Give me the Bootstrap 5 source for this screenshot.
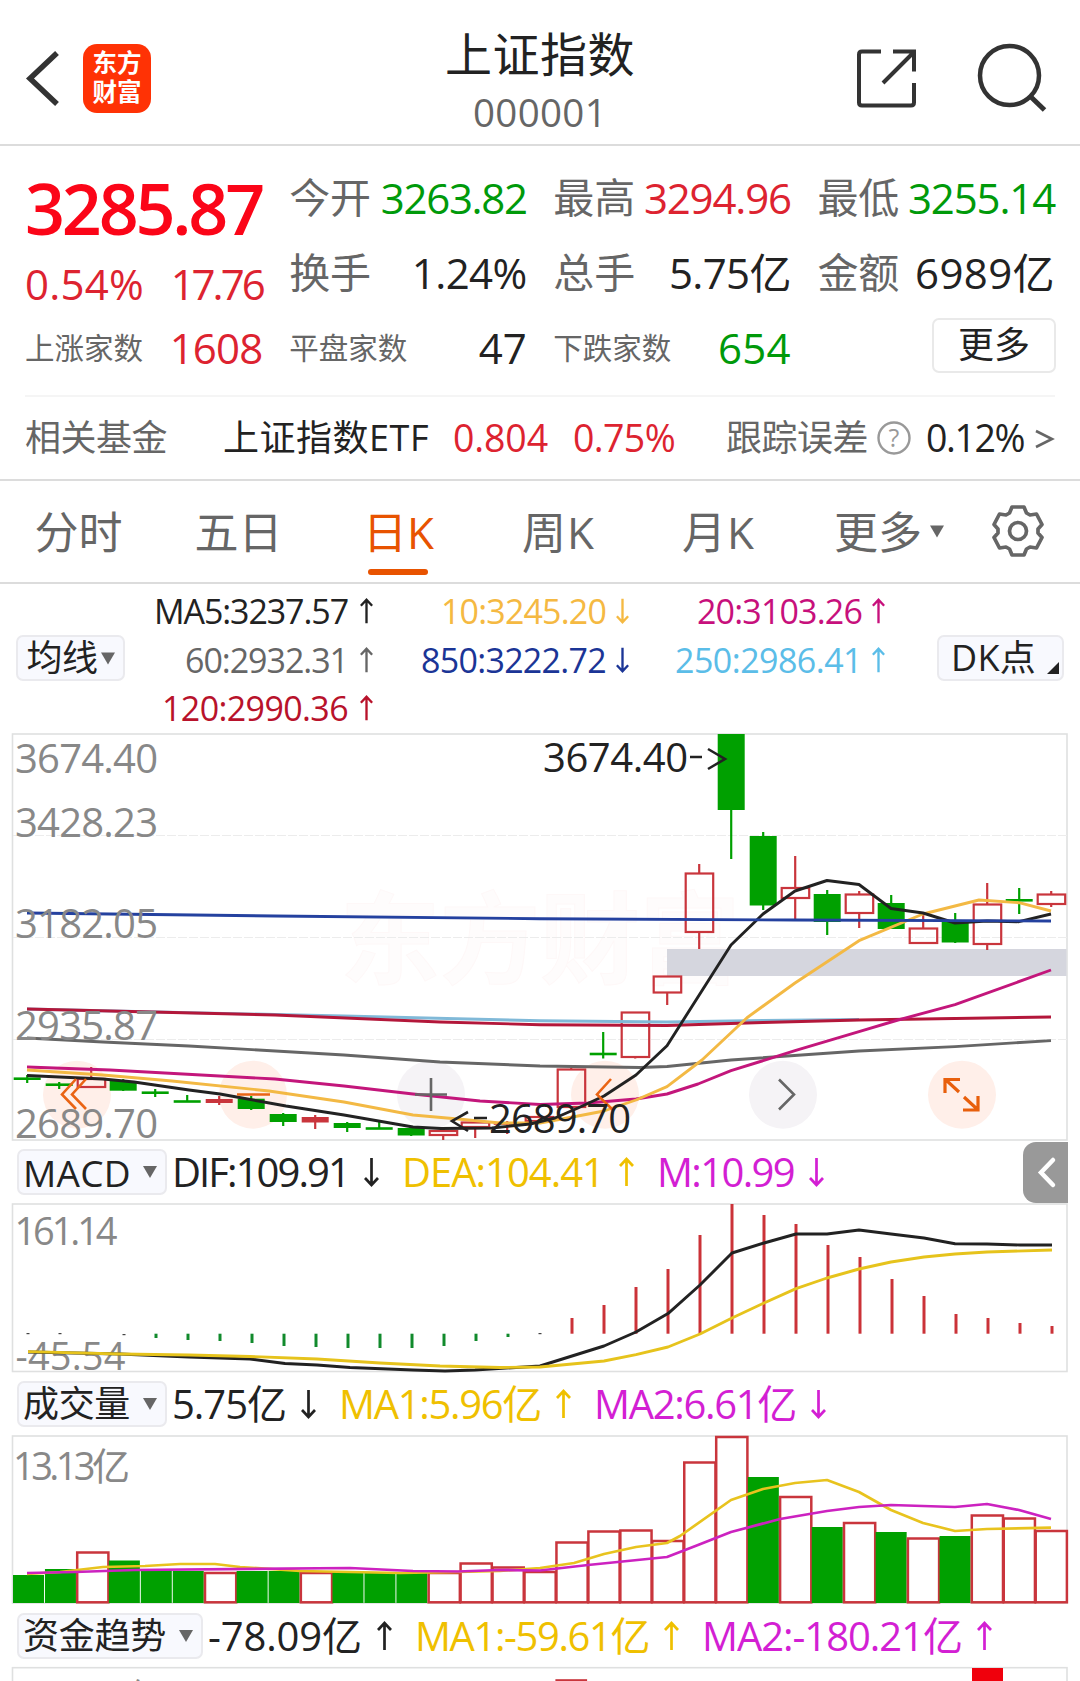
<!DOCTYPE html>
<html lang="zh-CN">
<head>
<meta charset="utf-8">
<meta name="viewport" content="width=device-width, initial-scale=1">
<title>上证指数 000001</title>
<link href="https://cdn.jsdelivr.net/npm/bootstrap@5.3.0/dist/css/bootstrap.min.css" rel="stylesheet">
<style>
:root{--ink:#222;--soft:#666;--up:#dd2330;--down:#009a0a;--line:#dcdcdc}
html,body{background:#fff}
body{font-family:"Open Sans","Noto Sans CJK SC",sans-serif;color:var(--ink);width:1080px;height:1681px;overflow:hidden;line-height:1;font-size:42px}
svg{display:block;flex:none;overflow:visible}
span{white-space:nowrap}
.up{color:var(--up)}.down{color:var(--down)}.soft{color:var(--soft)}
.topbar{height:146px;border-bottom:2px solid var(--line);display:grid;grid-template-columns:1fr auto 1fr}
.topbar h1{font-size:47px;line-height:60px;font-weight:400;margin:24px 0 0}
.code{font-size:38.5px;line-height:38px;margin-top:9px}
.logo{width:68px;height:69px;margin:44px 0 0 25px;border-radius:14px;background:#ff3205;color:#fff;font-weight:700;font-size:24.5px;line-height:29px;padding-top:4px}
.quote{height:249px;padding:0 25px}
.quote .row{--bs-gutter-x:26.5px}
.cell{height:75px}
.big{font-size:70px;font-weight:600;color:#fb0518;height:76px}
.lbl{font-size:41px;color:var(--soft)}
.lbl-s{font-size:29.5px;color:var(--soft)}
.morebtn{width:124px;height:55px;border:2px solid #e9e9e9;border-radius:7px;font-size:36px;margin:-5px -1px 0 0}
.fund{height:84px;margin:0 25px;border-top:2px solid #f5f5f5;font-size:36px;padding-bottom:1px}
.num{font-size:37.5px}
.tabs{height:105px;border-top:2px solid var(--line);border-bottom:2px solid var(--line);font-size:44px;color:var(--soft)}
.tabs .t{width:160px;height:101px;position:relative;padding-right:3px}
.tabs .on{color:#e85300}
.tabs .on::after{content:"";position:absolute;left:48px;bottom:7px;width:60px;height:6px;border-radius:3px;background:#e85300}
.averages{height:149px;padding:3px 16px 0 16px}
.avg{display:grid;grid-template-columns:249px 256px 256px;grid-auto-rows:48.5px;font-size:34px}
.avg>div{display:flex;align-items:center;justify-content:flex-end}
.chip{height:46px;border:2px solid #eaeaee;border-radius:7px;background:#f8f9fe;font-size:36px}
.ind{height:62px;padding-left:17px;font-size:40px;position:relative}
.ind .chip{padding:0 8px 0 4px;margin-right:5px}
.arr{margin-left:15px;margin-right:23px}
.avg .arr{margin:0 0 0 9px}
.avg .wide .arr,.avg .arr.wide{margin-left:11px}
.drawer{position:absolute;right:12px;top:1px;width:45px;height:61px;border-radius:13px 0 0 13px;background:#999}
</style>
<script src="https://cdn.jsdelivr.net/npm/bootstrap@5.3.0/dist/js/bootstrap.bundle.min.js"></script>
</head>
<body>
<svg width="0" height="0" class="position-absolute">
  <symbol id="au" viewBox="0 0 15 30"><path d="M7.500 29V2M1 9l6.500-7L14 9" fill="none" stroke="currentColor" stroke-width="2.700"/></symbol>
  <symbol id="ad" viewBox="0 0 15 30"><path d="M7.500 1v27M1 21l6.500 7 6.500-7" fill="none" stroke="currentColor" stroke-width="2.700"/></symbol>
  <symbol id="tri" viewBox="0 0 14 12"><path d="M0 0h14L7 12z" fill="#666"/></symbol>
</svg>

<header class="topbar">
  <div class="d-flex">
    <svg width="58" height="144"><path d="M57 53L30 78.500 57 104" fill="none" stroke="#333" stroke-width="5.500"/></svg>
    <div class="logo text-center">东方<br>财富</div>
  </div>
  <div class="text-center">
    <h1><span data-fit="190">上证指数</span></h1>
    <div class="code soft"><span data-fit="134">000001</span></div>
  </div>
  <div class="d-flex justify-content-end">
    <svg width="230" height="144" viewBox="850 0 230 144" fill="none" stroke="#333" stroke-width="4">
      <path d="M881 51.500h-19q-3 0-3 3v48q0 3 3 3h49q3 0 3-3V83M893 51.500h21v20M913 53L883 83"/>
      <circle cx="1009.500" cy="75.500" r="29.500" stroke-width="4.500"/><path d="M1031 97l13.500 13" stroke-width="5"/>
    </svg>
  </div>
</header>

<section class="quote">
  <div class="row">
    <div class="col-3" style="padding-top:24px">
      <div class="big d-flex align-items-center"><span data-fit="237">3285.87</span></div>
      <div class="d-flex align-items-center justify-content-between up" style="height:75px"><span data-fit="119">0.54%</span><span data-fit="92">17.76</span></div>
      <div class="d-flex align-items-center justify-content-between" style="height:54px"><span class="lbl-s">上涨家数</span><span class="up" data-fit="93">1608</span></div>
    </div>
    <div class="col-3" style="padding-top:14px">
      <div class="cell d-flex align-items-center justify-content-between"><span class="lbl">今开</span><span class="down" data-fit="146">3263.82</span></div>
      <div class="cell d-flex align-items-center justify-content-between"><span class="lbl">换手</span><span data-fit="115">1.24%</span></div>
      <div class="cell d-flex align-items-center justify-content-between"><span class="lbl-s">平盘家数</span><span data-fit="48">47</span></div>
    </div>
    <div class="col-3" style="padding-top:14px">
      <div class="cell d-flex align-items-center justify-content-between"><span class="lbl">最高</span><span class="up" data-fit="147">3294.96</span></div>
      <div class="cell d-flex align-items-center justify-content-between"><span class="lbl">总手</span><span data-fit="122">5.75亿</span></div>
      <div class="cell d-flex align-items-center justify-content-between"><span class="lbl-s">下跌家数</span><span class="down" data-fit="73">654</span></div>
    </div>
    <div class="col-3" style="padding-top:14px">
      <div class="cell d-flex align-items-center justify-content-between"><span class="lbl">最低</span><span class="down" data-fit="147">3255.14</span></div>
      <div class="cell d-flex align-items-center justify-content-between"><span class="lbl">金额</span><span data-fit="140">6989亿</span></div>
      <div class="cell d-flex align-items-center justify-content-end"><div class="morebtn d-flex align-items-center justify-content-center">更多</div></div>
    </div>
  </div>
</section>

<section class="fund d-flex align-items-center">
  <span class="soft" data-fit="142">相关基金</span>
  <span data-fit="206" style="margin-left:56px">上证指数ETF</span>
  <span class="up num" data-fit="95" style="margin-left:24px">0.804</span>
  <span class="up num" data-fit="102" style="margin-left:25px">0.75%</span>
  <span class="soft" data-fit="142" style="margin-left:51px">跟踪误差</span>
  <svg width="34" height="34" style="margin-left:9px"><circle cx="17" cy="17" r="15.500" fill="none" stroke="#999" stroke-width="2.400"/><text x="17" y="26" text-anchor="middle" font-size="25" fill="#999">?</text></svg>
  <span class="num" data-fit="98" style="margin-left:15px">0.12%</span>
  <svg width="20" height="22" style="margin-left:11px"><path d="M1 4l16 8-16 8" fill="none" stroke="#666" stroke-width="2.600"/></svg>
</section>

<nav class="tabs d-flex">
  <div class="t d-flex align-items-center justify-content-center">分时</div>
  <div class="t d-flex align-items-center justify-content-center">五日</div>
  <div class="t on d-flex align-items-center justify-content-center"><span data-fit="71">日K</span></div>
  <div class="t d-flex align-items-center justify-content-center"><span data-fit="73">周K</span></div>
  <div class="t d-flex align-items-center justify-content-center"><span data-fit="73">月K</span></div>
  <div class="d-flex align-items-center justify-content-center" style="width:178px"><span>更多</span><svg width="14" height="13" style="margin-left:8px"><use href="#tri"/></svg></div>
  <svg width="80" height="100" viewBox="-40 -50 80 100" fill="none" stroke="#666" stroke-width="3.700" stroke-linejoin="round">
    <path d="M-6 -24H6L8.500-18 12-16 18.500-17 24-6.500 20-2V2L24 6.500 18.500 17 12 16 8.500 18 6 24H-6L-8.500 18-12 16-18.500 17-24 6.500-20 2V-2L-24-6.500-18.500-17-12-16-8.500-18Z"/><circle r="8.500"/>
  </svg>
</nav>

<section class="averages d-flex justify-content-between">
  <div class="chip d-flex align-items-center justify-content-center" style="width:109px;margin-top:48px"><span data-fit="71">均线</span><svg width="14" height="13" style="margin-left:3px"><use href="#tri"/></svg></div>
  <div class="avg">
    <div style="color:#222"><span data-fit="194">MA5:3237.57</span><svg class="arr wide" width="15" height="26"><use href="#au"/></svg></div>
    <div style="color:#f5b942"><span data-fit="165">10:3245.20</span><svg class="arr" width="15" height="26"><use href="#ad"/></svg></div>
    <div style="color:#c7107c"><span data-fit="165">20:3103.26</span><svg class="arr" width="15" height="26"><use href="#au"/></svg></div>
    <div style="color:#666"><span data-fit="163">60:2932.31</span><svg class="arr wide" width="15" height="26"><use href="#au"/></svg></div>
    <div style="color:#1b3596"><span data-fit="185">850:3222.72</span><svg class="arr" width="15" height="26"><use href="#ad"/></svg></div>
    <div style="color:#5bbde8"><span data-fit="187">250:2986.41</span><svg class="arr" width="15" height="26"><use href="#au"/></svg></div>
    <div style="color:#b8122b"><span data-fit="186">120:2990.36</span><svg class="arr wide" width="15" height="26"><use href="#au"/></svg></div>
  </div>
  <div class="chip d-flex align-items-center" style="width:127px;margin-top:48px;margin-left:51px;padding-left:12px"><span data-fit="85">DK点</span><svg width="12" height="12" style="margin:20px 0 0 11px"><path d="M12 0v12H0z" fill="#222"/></svg></div>
</section>

<svg id="kline" width="1080" height="408" viewBox="0 733 1080 408"></svg>

<div class="ind d-flex align-items-center">
  <div class="chip d-flex align-items-center justify-content-between" style="width:150px"><span data-fit="108" style="font-size:37px">MACD</span><svg width="14" height="12"><use href="#tri"/></svg></div>
  <span data-fit="177">DIF:109.91</span><svg class="arr" width="15" height="30"><use href="#ad"/></svg>
  <span style="color:#efc000" data-fit="202">DEA:104.41</span><svg style="color:#efc000" class="arr" width="15" height="30"><use href="#au"/></svg>
  <span style="color:#d31fd3" data-fit="137">M:10.99</span><svg style="color:#d31fd3" class="arr" width="15" height="30"><use href="#ad"/></svg>
  <div class="drawer"><svg width="45" height="61"><path d="M30 18L18 30.500 30 43" fill="none" stroke="#fff" stroke-width="4.500" stroke-linecap="round"/></svg></div>
</div>
<svg id="macd" width="1080" height="170" viewBox="0 1203 1080 170"></svg>

<div class="ind d-flex align-items-center">
  <div class="chip d-flex align-items-center justify-content-between" style="width:150px"><span data-fit="107">成交量</span><svg width="14" height="12"><use href="#tri"/></svg></div>
  <span data-fit="114">5.75亿</span><svg class="arr" width="15" height="30"><use href="#ad"/></svg>
  <span style="color:#efc000" data-fit="202">MA1:5.96亿</span><svg style="color:#efc000" class="arr" width="15" height="30"><use href="#au"/></svg>
  <span style="color:#d31fd3" data-fit="202">MA2:6.61亿</span><svg style="color:#d31fd3" class="arr" width="15" height="30"><use href="#ad"/></svg>
</div>
<svg id="vol" width="1080" height="169" viewBox="0 1435 1080 169"></svg>

<div class="ind d-flex align-items-center" style="height:63px">
  <div class="chip d-flex align-items-center justify-content-between" style="width:186px"><span data-fit="143">资金趋势</span><svg width="14" height="12"><use href="#tri"/></svg></div>
  <span data-fit="154">-78.09亿</span><svg class="arr" width="15" height="30"><use href="#au"/></svg>
  <span style="color:#efc000" data-fit="234">MA1:-59.61亿</span><svg style="color:#efc000" class="arr" width="15" height="30"><use href="#au"/></svg>
  <span style="color:#d31fd3" data-fit="260">MA2:-180.21亿</span><svg style="color:#d31fd3" class="arr" width="15" height="30"><use href="#au"/></svg>
</div>
<svg id="flow" width="1080" height="14" viewBox="0 1667 1080 14"></svg>

<script>
const RED='#c9353c',GREEN='#00a000';
document.querySelectorAll('[data-fit]').forEach(e=>{
  const w=e.getBoundingClientRect().width,n=[...e.textContent].length;
  e.style.letterSpacing=((e.dataset.fit-w)/n)+'px';
});
const R=(x,y,w,h,f,s,sw)=>`<rect x="${x}" y="${y}" width="${w}" height="${h}" fill="${f}"${s?` stroke="${s}" stroke-width="${sw||2.2}"`:''}/>`;
const L=(x1,y1,x2,y2,c,w=2.2,d='')=>`<path d="M${x1} ${y1}L${x2} ${y2}" stroke="${c}" stroke-width="${w}"${d?` stroke-dasharray="${d}"`:''}/>`;
const P=(pts,c,w=2.9)=>`<polyline points="${pts}" fill="none" stroke="${c}" stroke-width="${w}" stroke-linejoin="round"/>`;
const T=(x,y,s,len,c='#888',fs=40)=>`<text x="${x}" y="${y}" font-size="${fs}" fill="${c}" textLength="${len}">${s}</text>`;

// Candles: kind (g/r filled, h hollow, c green cross, x red cross), body top, body bottom, high, low
const K=[['c',1078.7,0,1075,1083],['c',1084.7,0,1082,1089],['h',1079,1087,1067,1088],['g',1081,1090.7,1079,1091],['c',1092.7,0,1089,1097],['c',1101.5,0,1095,1102],['r',1099,1103,1096,1105],['g',1098.7,1109,1096,1110],['g',1114,1122,1113,1126],['r',1117,1122.5,1115,1129],['g',1123,1128,1122,1132],['c',1128.5,0,1122,1129],['g',1128,1135.5,1127,1136],['h',1131,1135,1130,1140],['h',1122.5,1127,1121,1138],['x',1123.5,0,1121,1134],['h',1117,1121,1116,1122],['h',1069.5,1107,1068,1108],['c',1054,0,1032,1058.5],['h',1012.5,1057,1012,1058.5],['h',976.5,992.5,976,1005],['h',873.5,932,864,949],['g',734,810,734,859],['g',836,905.5,832,910],['h',888,898,856,919],['g',894,922,890,935],['h',894.5,913,891,928],['g',903,929,895,929],['h',928.5,943,915,943],['g',921,942.5,913,943],['h',904.5,944,883,950],['c',900.3,0,888,914],['h',894.5,904,891,907]];
let k=R(12.500,734,1054.500,406,'none','#dfe0e0',1.6);
k+=`<text x="340" y="976" font-size="100" font-weight="700" font-family="Noto Sans CJK SC" fill="#fefcfc" stroke="#fef8f8" textLength="400">东方财富</text>`;
[835.5,937.5,1039.5].forEach(y=>k+=L(13,y,1067,y,'#ececec',1,'9 2'));
k+=R(667,949,399.500,27,'#d5d6de');
[77,253,431,605,783,962].forEach((x,i)=>k+=`<circle cx="${x}" cy="1094.700" r="34" fill="${i==2||i==4?'#f5f3f6':'#ffefe9'}"/>`);
K.forEach(([t,a,b,hi,lo],i)=>{
  const x=27.2+i*32,c=(t=='g'||t=='c')?GREEN:RED;
  if(t=='h'){k+=L(x,hi,x,a,c)+L(x,b,x,lo,c)+R(x-13.500,a,27.500,b-a,'none',c);}
  else{k+=L(x,hi,x,lo,c,2.2);k+=(t=='c'||t=='x')?L(x-13.500,a,x+13.500,a,c,2.6):R(x-13.500,a,27,b-a,c);}
});
k+=P('27,1009 157,1012 275,1014.5 344,1016 540,1020.700 667,1022 763,1020.500 859,1019.500','#80b9d8');
k+=P('27,1009 275,1015 440,1022 540,1024.700 667,1025.500 763,1022.500 859,1020 1051,1017','#b3173a');
k+=P('27,1038 103,1042 189,1046 344,1055 440,1062 540,1066 640,1067.500 667,1066.500 731,1060 859,1051 955,1046.600 1051,1040.600','#666');
k+=P('27,1067 110,1070 275,1079 344,1086 413,1094 480,1101 540,1104.500 588,1103 636,1099 667,1094 698,1084 731,1070.700 795,1050.700 859,1031.700 898,1020 955,1004.700 1051,970','#c3167b');
k+=P('27,1070 103,1075 172,1081 269,1091 344,1102 413,1115 458,1119 500,1123 540,1123 574,1116.700 604,1111 636,1100 667,1086.700 702,1060 747,1017.700 795,983 859,940.700 923,914 979,900 1019,902.700 1051,911','#f3b944');
k+=P('27,1075.500 103,1079 134,1082 189,1090 220,1094 286,1106 344,1115 413,1127 441,1128.500 492,1128 530,1124 555,1118 578,1108 604,1096 636,1075 667,1045.700 731,945 763,914 795,891 827,880.500 859,884.500 891,908.500 923,913 955,923 987,921 1019,921.700 1051,914','#222');
k+=P('27,913 275,916 540,918.700 795,920 1051,921','#24419f');
const I=(d,c)=>`<path d="${d}" fill="none" stroke="${c}" stroke-width="2.600"/>`;
k+=I('M76 1079L62 1094.500 76 1109M86 1079L72 1094.500 86 1109M237 1094.500h33M611 1079L597 1094.500 613 1110','#ea6414');
k+=I('M431 1078v33M415 1094.500h32M779 1079.500L794 1094.500 779 1109.500','#666');
k+=`<path d="M959 1092L946 1080M945 1093V1079.500H960M964 1097L977 1109M963 1110H978V1096" fill="none" stroke="#e85f0c" stroke-width="3.200"/>`;
[['3674.40',773],['3428.23',837],['3182.05',938],['2935.87',1040],['2689.70',1138]].forEach(([s,y])=>k+=T(15,y,s,143));
k+=T(543,772,'3674.40',145,'#222')+I('M690 757h12M708 749L725 759 708 769','#222');
k+=I('M468 1112L452 1121 468 1131M474 1118h13','#222')+T(489,1133,'2689.70',142,'#222');
kline.innerHTML=k;

// MACD histogram ends, one per trading day; zero axis at 1333.7
const M=[1333,1333,,1334,1338,1340,1341,1343,1346,1347,1348,1348,1348,1346,1341,1337,1333,1318,1305,1287,1269,1235,1204,1215,1224,1245,1257,1279,1296,1314,1318,1323,1326];
let m=R(12.500,1204,1054.500,167.500,'none','#dfe0e0',1.6);
m+=T(14.500,1244.500,'161.14',103,'#888',38)+T(15.500,1370,'-45.54',110,'#888',38);
M.forEach((y,i)=>{const x=28+i*32;m+=(i<4||i==16)?R(x-1.500,y,3,1.2,'#444'):L(x,1333.7,x,y,i<17?'#118a2c':'#cb3238',3);});
m+=P('28,1352 120,1354 165,1356 189,1357 250,1359 285,1363.500 317,1365 350,1367.500 413,1370 445,1371 475,1370 540,1366 604,1346 636,1332 668,1313.600 700,1285 732,1253 764,1243 796,1234 827,1234 859,1230 891,1234 924,1238 955,1243.700 987,1244 1020,1245 1052,1245','#222');
m+=P('28,1351.600 120,1354 189,1355 250,1356.500 317,1359 380,1363 440,1366 500,1367.500 540,1367 604,1361 636,1354.600 668,1347 700,1334 732,1318 764,1303 796,1288.600 827,1278 859,1269 891,1262 924,1257 955,1254 987,1252 1052,1250','#e6c31c');
macd.innerHTML=m;

// Volume: r = up day (hollow), g = down day (filled), bar top
const V='g1575 g1569 r1552.5 g1560.5 g1570 g1571 r1573 g1571 g1571 r1573 g1572 g1572 g1572 r1573 r1563.5 r1567.5 r1572 r1542.5 r1531.500 r1530.5 r1541 r1462.5 r1437 g1477 r1497 g1527 r1523 g1532 r1538.5 g1536 r1515.5 r1518.5 r1531'.split(' ');
let v=R(12.500,1436,1054.500,167,'none','#dfe0e0',1.6)+T(13,1480,'13.13亿',117,'#888',38);
V.forEach((s,i)=>{const x=12.5+i*31.95,y=+s.slice(1);v+=s[0]=='g'?R(x+.5,y,31,1603-y,GREEN):R(x+.8,y,31.2,1602.300-y,'none',RED,2.500);});
v+=P('27,1574 60,1572 103,1567 145,1566 180,1564 215,1564 240,1567 300,1571 400,1573 458,1572 500,1571 540,1568 574,1563 604,1554 636,1547 667,1543 680,1536 731,1500 763,1489 795,1483 827,1480 859,1492 891,1510 923,1523 955,1531 987,1529 1051,1527.700','#e8c31e',2.7);
v+=P('27,1573 75,1572 134,1570 350,1568 413,1571 458,1571.500 500,1570 540,1570.500 588,1565 667,1557 698,1545 731,1532 780,1519 827,1511 859,1507 891,1505 955,1507 987,1504 1019,1510 1051,1519','#cc22c0',2.7);
vol.innerHTML=v;

flow.innerHTML=R(12.500,1667.700,1054.500,60,'none','#dfe0e0',1.6)+R(556.500,1680.300,29.500,20,'none',RED)+R(972,1668,31,14,'#f0000c')+`<text x="127" y="1710" font-size="36" fill="#888">亿</text>`;
</script>
</body>
</html>
